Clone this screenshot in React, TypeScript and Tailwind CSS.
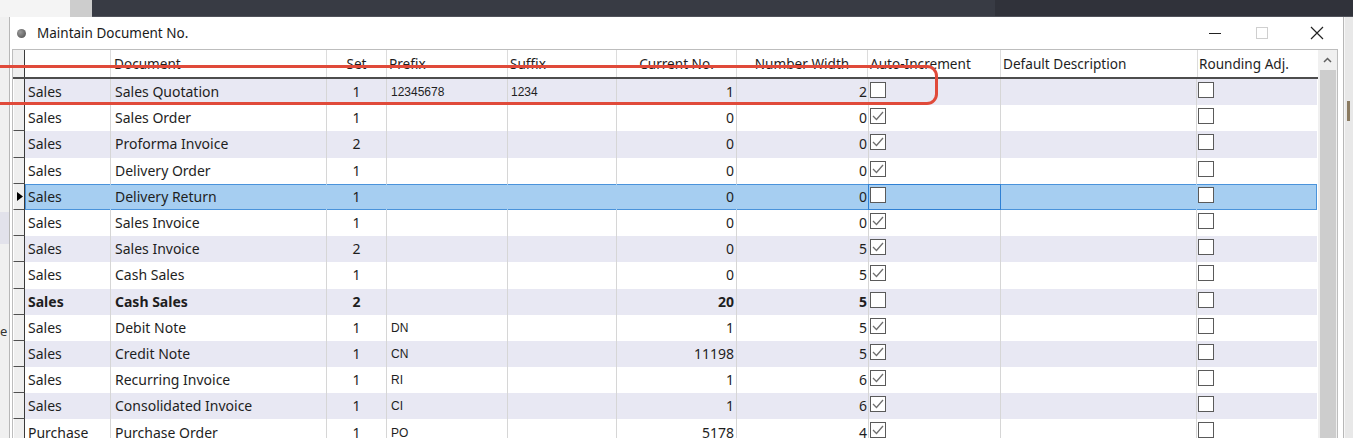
import React from "react";

type Row = {
  mod: string;
  doc: string;
  set: string;
  prefix: string;
  suffix: string;
  cur: string;
  nw: string;
  auto: boolean;
  bold?: boolean;
  sel?: boolean;
};

const rows: Row[] = [
  { mod: "Sales", doc: "Sales Quotation", set: "1", prefix: "12345678", suffix: "1234", cur: "1", nw: "2", auto: false },
  { mod: "Sales", doc: "Sales Order", set: "1", prefix: "", suffix: "", cur: "0", nw: "0", auto: true },
  { mod: "Sales", doc: "Proforma Invoice", set: "2", prefix: "", suffix: "", cur: "0", nw: "0", auto: true },
  { mod: "Sales", doc: "Delivery Order", set: "1", prefix: "", suffix: "", cur: "0", nw: "0", auto: true },
  { mod: "Sales", doc: "Delivery Return", set: "1", prefix: "", suffix: "", cur: "0", nw: "0", auto: false, sel: true },
  { mod: "Sales", doc: "Sales Invoice", set: "1", prefix: "", suffix: "", cur: "0", nw: "0", auto: true },
  { mod: "Sales", doc: "Sales Invoice", set: "2", prefix: "", suffix: "", cur: "0", nw: "5", auto: true },
  { mod: "Sales", doc: "Cash Sales", set: "1", prefix: "", suffix: "", cur: "0", nw: "5", auto: true },
  { mod: "Sales", doc: "Cash Sales", set: "2", prefix: "", suffix: "", cur: "20", nw: "5", auto: false, bold: true },
  { mod: "Sales", doc: "Debit Note", set: "1", prefix: "DN", suffix: "", cur: "1", nw: "5", auto: true },
  { mod: "Sales", doc: "Credit Note", set: "1", prefix: "CN", suffix: "", cur: "11198", nw: "5", auto: true },
  { mod: "Sales", doc: "Recurring Invoice", set: "1", prefix: "RI", suffix: "", cur: "1", nw: "6", auto: true },
  { mod: "Sales", doc: "Consolidated Invoice", set: "1", prefix: "CI", suffix: "", cur: "1", nw: "6", auto: true },
  { mod: "Purchase", doc: "Purchase Order", set: "1", prefix: "PO", suffix: "", cur: "5178", nw: "4", auto: true },
];

function CheckBox({ checked }: { checked: boolean }) {
  return (
    <span className="w-[16px] h-[16px] border-[1.5px] border-[#5a5a5a] bg-white flex items-center justify-center shrink-0">
      {checked && (
        <svg width="14" height="14" viewBox="0 0 14 14">
          <polyline points="2,7 5.5,10.5 12,3" fill="none" stroke="#6f6f6f" strokeWidth="1.3" />
        </svg>
      )}
    </span>
  );
}

function DataRow({ r, i }: { r: Row; i: number }) {
  const bg = r.sel ? "bg-[#a6cef1]" : i % 2 === 0 ? "bg-[#e8e8f3]" : "bg-white";
  const line = r.sel ? "border-[#a6cef1]" : "border-[#d6d6d6]";
  const weight = r.bold ? "font-bold" : "font-normal";
  return (
    <div className="flex h-[26.2px] shrink-0">
      <div className="w-[12px] bg-[#efefef] border-l border-l-white border-r border-r-[#3a3a3a] border-b border-b-[#505050] flex items-center">
        {r.sel && (
          <svg width="6" height="9" viewBox="0 0 6 9" className="ml-[3px]">
            <path d="M0 0 L6 4.5 L0 9 Z" fill="#000" />
          </svg>
        )}
      </div>
      <div
        className={`flex ${bg} ${weight} ${r.sel ? "shadow-[inset_0_0_0_1px_#4a93db]" : ""} text-[14px] leading-none text-[#1e1e1e]`}
      >
        <div className={`w-[86px] border-r ${line} flex items-center pl-[3px]`}>{r.mod}</div>
        <div className={`w-[216px] border-r ${line} flex items-center pl-[4px]`}>{r.doc}</div>
        <div className={`w-[60px] border-r ${line} flex items-center justify-center`}>{r.set}</div>
        <div className={`w-[121px] border-r ${line} flex items-center pl-[4px] font-['Liberation_Sans',sans-serif] text-[12px]`}>
          {r.prefix}
        </div>
        <div className={`w-[109px] border-r ${line} flex items-center pl-[3px] font-['Liberation_Sans',sans-serif] text-[12px]`}>
          {r.suffix}
        </div>
        <div className={`w-[120px] border-r ${line} flex items-center justify-end pr-[2px]`}>{r.cur}</div>
        <div className="w-[131px] flex items-center justify-end pr-[1px]">{r.nw}</div>
        <div
          className={`w-[133px] border-l border-r ${r.sel ? "border-[#2f80d4] shadow-[inset_0_1px_0_#2f80d4,inset_0_-1px_0_#2f80d4]" : "border-[#d6d6d6]"} flex items-start pt-[3px] pl-[1px]`}
        >
          <CheckBox checked={r.auto} />
        </div>
        <div className={`w-[196px] border-r ${line}`} />
        <div className="w-[120px] flex items-start pt-[3px] pl-[1px]">
          <CheckBox checked={false} />
        </div>
      </div>
    </div>
  );
}

export default function App() {
  return (
    <div className="w-[1353px] h-[438px] overflow-hidden relative bg-[#f0f0f0] font-['Noto_Sans',sans-serif] text-[#1e1e1e]">
      {/* background top strip */}
      <div className="flex h-[17px]">
        <div className="w-[70px] bg-[#f4f4f4]" />
        <div className="w-[22px] bg-[#cdcdcd]" />
        <div className="w-[903px] bg-[#383b44] border-b border-[#50525a]" />
        <div className="flex-1 bg-[#30323a] border-b border-[#50525a]" />
      </div>

      <div className="flex h-[421px]">
        {/* left background strip */}
        <div className="w-[9px] bg-[#f0f0f0] flex flex-col overflow-hidden">
          <div className="h-[195px] shrink-0" />
          <div className="h-[32px] shrink-0 bg-[#e2e2eb]" />
          <div className="h-[81px] shrink-0" />
          <div className="text-[13px] leading-none text-[#333]">e</div>
        </div>

        {/* dialog */}
        <div className="w-[1335px] bg-white border-l border-r border-[#b7b7b7] flex flex-col">
          {/* title bar */}
          <div className="h-[32px] shrink-0 flex items-center">
            <span className="ml-[7px] w-[9px] h-[9px] rounded-full bg-[radial-gradient(circle_at_35%_35%,#9a9a9a,#4a4a4a)]" />
            <span className="ml-[11px] text-[13.5px] text-[#1a1a1a]">Maintain Document No.</span>
            <div className="ml-auto flex items-center">
              <div className="w-[30px] h-[30px] flex items-center justify-center">
                <span className="w-[12px] h-[1px] bg-[#222]" />
              </div>
              <div className="ml-[17px] w-[30px] h-[30px] flex items-center justify-center">
                <span className="w-[12px] h-[12px] border border-[#cfcfcf]" />
              </div>
              <div className="ml-[25px] w-[30px] h-[30px] flex items-center justify-center">
                <svg width="14" height="14" viewBox="0 0 14 14">
                  <path d="M1 1 L13 13 M13 1 L1 13" stroke="#222" strokeWidth="1.2" />
                </svg>
              </div>
              <div className="w-[11px]" />
            </div>
          </div>

          {/* grid */}
          <div className="pl-[2px] pr-[5px] flex-1 overflow-hidden">
            <div className="w-[1326px] h-full border-t border-l border-r border-[#bdbdbd] flex">
              <div className="w-[1305px] flex flex-col overflow-hidden">
                {/* header */}
                <div className="flex h-[29px] shrink-0 border-b-2 border-[#4d4d4d] text-[13.6px] leading-none text-[#1e1e1e]">
                  <div className="w-[12px] bg-[#efefef] border-r border-[#3a3a3a]" />
                  <div className="w-[86px] border-r border-[#dcdcdc]" />
                  <div className="w-[216px] border-r border-[#dcdcdc] flex items-center pl-[3px]">Document</div>
                  <div className="w-[60px] border-r border-[#dcdcdc] flex items-center justify-center">Set</div>
                  <div className="w-[121px] border-r border-[#dcdcdc] flex items-center pl-[2px]">Prefix</div>
                  <div className="w-[109px] border-r border-[#dcdcdc] flex items-center pl-[2px]">Suffix</div>
                  <div className="w-[120px] border-r border-[#dcdcdc] flex items-center justify-center">Current No.</div>
                  <div className="w-[131px] border-r border-[#dcdcdc] flex items-center justify-center">Number Width</div>
                  <div className="w-[133px] border-r border-[#dcdcdc] flex items-center pl-[2px]">Auto-Increment</div>
                  <div className="w-[197px] border-r border-[#dcdcdc] flex items-center pl-[2px]">Default Description</div>
                  <div className="w-[120px] flex items-center pl-[1px]">Rounding Adj.</div>
                </div>
                {rows.map((r, i) => (
                  <DataRow key={i} r={r} i={i} />
                ))}
              </div>
              {/* scrollbar */}
              <div className="w-[19px] bg-[#f0f0f0] flex flex-col">
                <div className="h-[20px] shrink-0 flex items-center justify-center">
                  <svg width="9" height="6" viewBox="0 0 9 6">
                    <path d="M1 5 L4.5 1.5 L8 5" fill="none" stroke="#606060" strokeWidth="1.5" />
                  </svg>
                </div>
                <div className="flex-1 ml-[2px] w-[16px] bg-[#cdcdcd]" />
              </div>
            </div>
          </div>
        </div>

        {/* right background strip */}
        <div className="flex-1 bg-[#e8e8e8] flex flex-col border-l border-[#f7f7f7]">
          <div className="h-[84px] shrink-0" />
          <div className="ml-[2px] w-[3px] h-[20px] bg-[#8a7a60]" />
        </div>
      </div>

      {/* red annotation */}
      <div className="absolute left-[-10px] top-[65px] w-[948px] h-[40px] border-[3px] border-[#e04a3a] rounded-[11px]" />
    </div>
  );
}
